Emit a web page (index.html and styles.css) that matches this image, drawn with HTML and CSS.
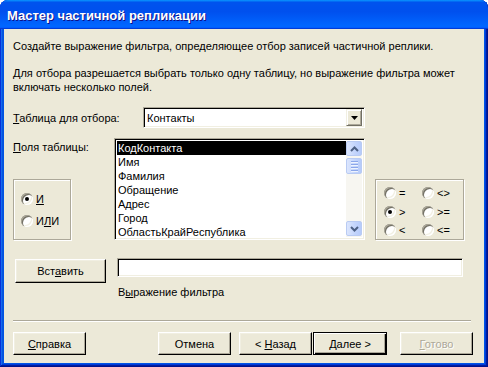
FILE: index.html
```html
<!DOCTYPE html>
<html lang="ru">
<head>
    <meta charset="UTF-8">
    <title>Мастер частичной репликации</title>
    <link rel="stylesheet" href="styles.css">
</head>
<body>
    <div class="window">
        <div class="titlebar">Мастер частичной репликации</div>
        <div class="content">
            <p class="intro">Создайте выражение фильтра, определяющее отбор записей частичной реплики.</p>
            <p class="note">Для отбора разрешается выбрать только одну таблицу, но выражение фильтра может<br>включать несколько полей.</p>

            <div class="row-table">
                <label class="lbl-table"><u>Т</u>аблица для отбора:</label>
                <div class="combo sunken">
                    <span class="combo-text">Контакты</span>
                    <span class="combo-btn">
                        <svg width="7" height="4" viewBox="0 0 7 4"><path d="M0 0h7L3.5 4z" fill="#000"/></svg>
                    </span>
                </div>
            </div>

            <div class="row-fields">
                <div class="fields-left">
                    <label class="lbl-fields"><u>П</u>оля таблицы:</label>
                    <div class="group group-logic">
                        <div class="opt"><span class="radio checked"></span><span><u>И</u></span></div>
                        <div class="opt"><span class="radio"></span><span>И<u>Л</u>И</span></div>
                    </div>
                </div>

                <div class="listbox sunken">
                    <ul class="items">
                        <li class="selected">КодКонтакта</li>
                        <li>Имя</li>
                        <li>Фамилия</li>
                        <li>Обращение</li>
                        <li>Адрес</li>
                        <li>Город</li>
                        <li>ОбластьКрайРеспублика</li>
                    </ul>
                    <div class="vscroll">
                        <span class="sb-btn">
                            <svg width="9" height="6" viewBox="0 0 9 6"><path d="M1 5L4.5 1.5L8 5" fill="none" stroke="#4D6185" stroke-width="2"/></svg>
                        </span>
                        <span class="sb-thumb"><i></i><i></i><i></i><i></i></span>
                        <span class="sb-track"></span>
                        <span class="sb-btn">
                            <svg width="9" height="6" viewBox="0 0 9 6"><path d="M1 1L4.5 4.5L8 1" fill="none" stroke="#4D6185" stroke-width="2"/></svg>
                        </span>
                    </div>
                </div>

                <div class="group group-ops">
                    <div class="opt"><span class="radio"></span><span>=</span></div>
                    <div class="opt"><span class="radio"></span><span>&lt;&gt;</span></div>
                    <div class="opt"><span class="radio checked"></span><span>&gt;</span></div>
                    <div class="opt"><span class="radio"></span><span>&gt;=</span></div>
                    <div class="opt"><span class="radio"></span><span>&lt;</span></div>
                    <div class="opt"><span class="radio"></span><span>&lt;=</span></div>
                </div>
            </div>

            <div class="row-insert">
                <button class="btn btn-insert">Вст<u>а</u>вить</button>
                <div class="expr">
                    <div class="expr-field sunken"></div>
                    <div class="expr-caption">В<u>ы</u>ражение фильтра</div>
                </div>
            </div>

            <div class="separator"></div>

            <div class="footer">
                <button class="btn"><u>С</u>правка</button>
                <button class="btn btn-cancel">Отмена</button>
                <button class="btn btn-back">&lt; <u>Н</u>азад</button>
                <button class="btn btn-default"><u>Д</u>алее &gt;</button>
                <button class="btn btn-finish" disabled><u>Г</u>отово</button>
            </div>
        </div>
    </div>
</body>
</html>
```

FILE: styles.css
```css
body { margin: 0; background: #fff; font-family: 'Liberation Sans', Arial, sans-serif; font-size: 11px; color: #000; }
u { text-decoration: underline; text-underline-offset: 1px; }

.window { width: 488px; height: 367px; display: flex; flex-direction: column; background: #0055e5; border-radius: 8px 8px 0 0; overflow: hidden;
    box-shadow: inset -1px -1px #00138c, inset 1px 1px #0831d9, inset -2px -2px #001ea0, inset 2px 2px #166aee, inset -3px -3px #003bda, inset 3px 3px #0855dd; }
.titlebar { height: 29px; line-height: 31px; padding-left: 7px; color: #fff; font-weight: bold; font-size: 13px; text-shadow: 1px 1px #0f1089;
    background: linear-gradient(to bottom, #0997ff 0%, #0053ee 8%, #0050ee 40%, #0066ff 88%, #0066ff 93%, #005bff 95%, #003dd7 96%, #003dd7 100%); }
.content { flex: 1; margin: 0 4px 4px; background: #ece9d8; padding: 10px 0 0 9px; }

p { margin: 0; line-height: 14px; white-space: nowrap; }
.note { margin-top: 13px; }

.sunken { background: #fff; border: 1px solid; border-color: #aca899 #fff #fff #aca899; box-shadow: inset 1px 1px #000, inset -1px -1px #f1efe2; box-sizing: border-box; }

.row-table { display: flex; align-items: center; margin-top: 13px; }
.lbl-table { width: 130px; }
.combo { width: 222px; height: 21px; display: flex; align-items: center; justify-content: space-between; padding: 2px; }
.combo-text { padding-left: 1px; }
.combo-btn { width: 16px; height: 17px; display: flex; align-items: center; justify-content: center; box-sizing: border-box; background: #ece9d8;
    border: 1px solid; border-color: #f1efe2 #716f64 #716f64 #f1efe2; box-shadow: inset 1px 1px #fff, inset -1px -1px #aca899; }

.row-fields { display: flex; align-items: flex-end; margin-top: 9px; }
.fields-left { width: 101px; height: 103px; display: flex; flex-direction: column; justify-content: space-between; }
.lbl-fields { padding-top: 3px; line-height: 14px; }

.group { border: 1px solid #aca899; box-shadow: inset 1px 1px #fff, 1px 1px #fff; box-sizing: border-box; }
.group-logic { width: 58px; height: 61px; padding: 12px 0 0 7px; display: flex; flex-direction: column; gap: 8px; }
.group-ops { width: 89px; height: 61px; margin-left: 10px; padding: 6px 0 0 8px; display: grid; grid-template-columns: 38px 40px; row-gap: 3px; }
.opt { display: flex; align-items: center; gap: 3px; height: 14px; }

.radio { width: 12px; height: 12px; border-radius: 50%; background: #fff; position: relative; flex: none;
    box-shadow: inset 1px 1px #aca899, inset 2px 2px #716f64, inset -1px -1px #fff, inset -2px -2px #f1efe2; }
.radio.checked::after { content: ''; position: absolute; left: 4px; top: 4px; width: 4px; height: 4px; border-radius: 50%; background: #000; }

.listbox { width: 251px; height: 102px; padding: 2px; display: flex; }
.items { list-style: none; margin: 0; padding: 0; flex: 1; }
.items li { height: 14px; line-height: 14px; padding-left: 1px; white-space: nowrap; overflow: hidden; }
.items li.selected { background: #000; color: #fff; }

.vscroll { width: 16px; display: flex; flex-direction: column; background: #f7f6f1; }
.sb-btn, .sb-thumb { height: 15px; margin: 0 0 1px; display: flex; align-items: center; justify-content: center; flex-direction: column; gap: 1px; box-sizing: border-box;
    border: 1px solid #b9cbf3; border-radius: 2px; background: linear-gradient(to right, #dce6fd, #c2d4fc 60%, #b6cbfa); }
.sb-thumb { height: 16px; margin-top: 1px; }
.sb-thumb i { width: 7px; height: 1px; background: #8ca7ea; border-bottom: 1px solid #eef3fe; }
.sb-track { flex: 1; }

.row-insert { display: flex; align-items: flex-start; margin-top: 18px; padding-left: 2px; }
.btn { width: 73px; height: 23px; padding: 0; background: #ece9d8; font: inherit; color: #000; box-sizing: border-box;
    border: 1px solid; border-color: #fff #000 #000 #fff; box-shadow: inset -1px -1px #aca899, inset 1px 1px #f1efe2; }
.btn-insert { width: 91px; height: 24px; margin-top: 1px; }
.expr { margin-left: 11px; }
.expr-field { width: 346px; height: 19px; }
.expr-caption { margin-top: 8px; line-height: 14px; padding-left: 1px; }

.separator { width: 458px; height: 1px; margin-top: 21px; background: #aca899; border-bottom: 1px solid #fff; }

.footer { display: flex; margin-top: 10px; }
.btn-cancel { margin-left: 72px; }
.btn-back { margin-left: 8px; }
.btn-default { width: 74px; margin-left: 1px; border: 1px solid #000; box-shadow: inset 1px 1px #fff, inset -1px -1px #000, inset -2px -2px #aca899; }
.btn-finish { margin-left: 13px; color: #aca899; text-shadow: 1px 1px #fff; }
```
